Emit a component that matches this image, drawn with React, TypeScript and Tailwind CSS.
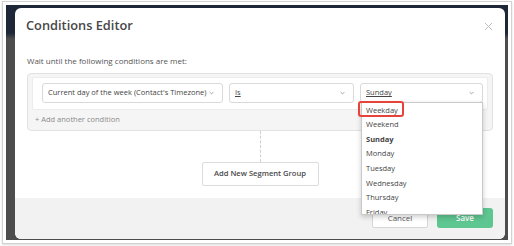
import React from "react";

const days = ["Weekday", "Weekend", "Sunday", "Monday", "Tuesday", "Wednesday", "Thursday", "Friday"];

function Chevron() {
  return (
    <svg width="5" height="4" viewBox="0 0 5 4" className="shrink-0">
      <path d="M0.6 1 L2.5 2.9 L4.4 1" fill="none" stroke="#9a9a9a" strokeWidth="0.9" />
    </svg>
  );
}

function Select({ label, width, underline, children }: { label: string; width: string; underline?: boolean; children?: React.ReactNode }) {
  return (
    <div className={`relative flex h-[20px] items-center justify-between rounded-[3px] border border-[#d9d9d9] bg-white pl-[5px] pr-[8px] ${width}`}>
      <span className={`text-[7.5px] text-[#454545] ${underline ? "underline underline-offset-[1px]" : ""}`}>{label}</span>
      <Chevron />
      {children}
    </div>
  );
}

export default function App() {
  return (
    <div className="h-[246px] w-[514px] overflow-hidden bg-white pl-[2px] pt-[1px] font-['Open_Sans',sans-serif]">
      <div className="h-[243px] w-[510px] border border-[#d2d2d2] bg-white p-[3px] shadow-[0_1px_2px_rgba(0,0,0,0.15)]">
        <div className="h-full w-full bg-[linear-gradient(180deg,#1d2738_0,#1d2738_28px,#4d4d4d_34px,#4d4d4d_100%)] pb-[1px] pl-[9px] pr-[3px] pt-[3px]">
          <div className="flex h-full flex-col overflow-hidden rounded-[6px] bg-white">
            <div className="flex h-[36px] shrink-0 items-center justify-between pl-[11px] pr-[12px]">
              <h2 className="text-[12.8px] font-semibold text-[#474747]">Conditions Editor</h2>
              <svg width="9" height="9" viewBox="0 0 9 9">
                <path d="M1 1 L8 8 M8 1 L1 8" stroke="#bcbcbc" strokeWidth="1" />
              </svg>
            </div>

            <div className="px-[12px] pt-[10px]">
              <p className="text-[8px] leading-[14px] text-[#555]">Wait until the following conditions are met:</p>

              <div className="mt-[5px] rounded-[4px] border border-[#e2e2e2] bg-[#f5f5f5] px-[4px] pt-[3px]">
                <div className="flex h-[33px] gap-[6px] rounded-[2px] border border-[#ececec] bg-white pl-[9px] pt-[5px]">
                  <Select label="Current day of the week (Contact's Timezone)" width="w-[181px]" />
                  <Select label="Is" width="w-[125px]" underline />
                  <Select label="Sunday" width="w-[123px]" underline>
                    <div className="absolute left-[0px] top-[18px] z-10 h-[113px] w-[122px] overflow-hidden border border-[#c9c9c9] bg-white shadow-[0_2px_5px_rgba(0,0,0,0.2)]">
                      {days.map((d) => (
                        <div
                          key={d}
                          className={`flex h-[14.6px] items-center pl-[4px] text-[7.5px] text-[#454545] ${d === "Sunday" ? "font-bold" : ""}`}
                        >
                          {d}
                        </div>
                      ))}
                    </div>
                    <div className="absolute left-[-3px] top-[17px] z-20 h-[16px] w-[46px] rounded-[3px] border-2 border-[#e6443b]" />
                  </Select>
                </div>
                <div className="flex h-[20px] items-center pl-[3px] text-[7.5px] text-[#8a8a8a]">+ Add another condition</div>
              </div>

              <div className="flex flex-col items-center">
                <div className="h-[31px] border-l border-dashed border-[#cfcfcf]" />
                <button className="h-[24px] w-[117px] rounded-[2px] border border-[#dcdcdc] bg-white text-[7.6px] font-semibold text-[#4a4a4a]">
                  Add New Segment Group
                </button>
              </div>
            </div>

            <div className="mt-[12px] flex flex-1 justify-end gap-[9px] bg-[#f2f2f2] pr-[12px] pt-[10px]">
              <button className="h-[20px] w-[56px] rounded-[2px] border border-[#d5d5d5] bg-white text-[8px] text-[#555]">Cancel</button>
              <button className="h-[20px] w-[56px] rounded-[3px] bg-[#5ec690] text-[8px] font-semibold text-white">Save</button>
            </div>
          </div>
        </div>
      </div>
    </div>
  );
}
